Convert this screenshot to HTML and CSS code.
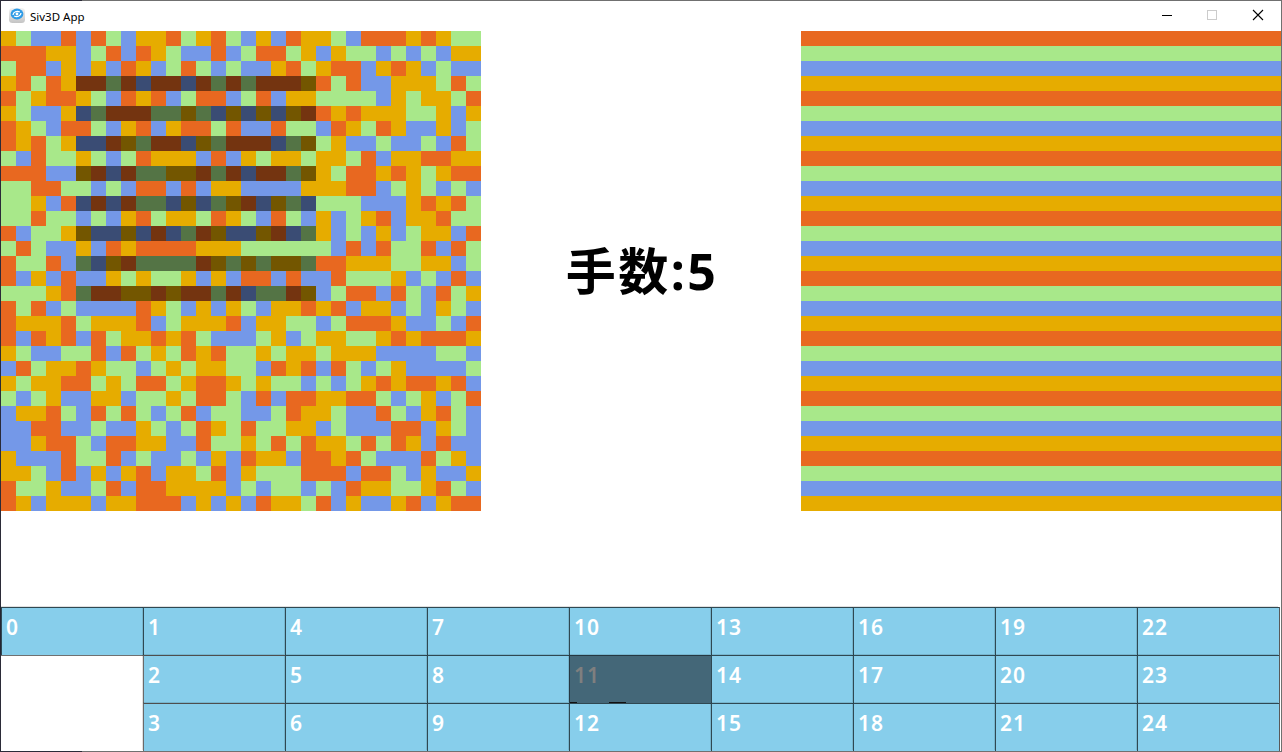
FILE: index.html
```html
<!DOCTYPE html>
<html lang="en">
<head>
    <meta charset="UTF-8">
    <meta name="viewport" content="width=device-width, initial-scale=1.0">
    <title>Siv3D App</title>
    <link rel="stylesheet" href="styles.css">
</head>
<body>
    <div class="window">
        <div class="titlebar">
            <svg class="app-icon" width="18" height="18" viewBox="0 0 18 18">
                <defs>
                    <linearGradient id="tile" x1="0" y1="0" x2="0" y2="1">
                        <stop offset="0" stop-color="#f4f4f4"/>
                        <stop offset="1" stop-color="#c4c4c4"/>
                    </linearGradient>
                </defs>
                <rect x="1" y="1" width="16" height="15" rx="3.5" fill="url(#tile)"/>
                <ellipse cx="9" cy="7" rx="6.4" ry="5.4" fill="#2f9be6"/>
                <path d="M5 8 C5.2 5 9 3.4 11.8 5 M13 6 C12.8 9 9 10.6 6.2 9" fill="none" stroke="#fff" stroke-width="1.3"/>
                <circle cx="9" cy="7" r="1.4" fill="#fff"/>
            </svg>
            <span class="app-name">Siv3D App</span>
            <div class="controls">
                <svg class="control" width="46" height="30" viewBox="0 0 46 30"><rect x="19" y="14" width="10" height="1" fill="#000"/></svg>
                <svg class="control" width="46" height="30" viewBox="0 0 46 30"><rect x="18.5" y="9.5" width="9" height="9" fill="none" stroke="#ccc"/></svg>
                <svg class="control" width="46" height="30" viewBox="0 0 46 30"><path d="M18 9 L28 19 M28 9 L18 19" stroke="#000" stroke-width="1.1"/></svg>
            </div>
        </div>

        <div class="boards">
            <div class="board" id="current"></div>
            <div class="moves">手数:5</div>
            <div class="board" id="goal"></div>
        </div>

        <div class="panel">
            <div class="btn">0</div>
            <div class="blank"></div>
            <div class="btn">1</div>
            <div class="btn edge">2</div>
            <div class="btn edge">3</div>
            <div class="btn">4</div>
            <div class="btn">5</div>
            <div class="btn">6</div>
            <div class="btn">7</div>
            <div class="btn">8</div>
            <div class="btn">9</div>
            <div class="btn">10</div>
            <div class="btn active">11</div>
            <div class="btn">12</div>
            <div class="btn">13</div>
            <div class="btn">14</div>
            <div class="btn">15</div>
            <div class="btn">16</div>
            <div class="btn">17</div>
            <div class="btn">18</div>
            <div class="btn">19</div>
            <div class="btn">20</div>
            <div class="btn">21</div>
            <div class="btn">22</div>
            <div class="btn">23</div>
            <div class="btn">24</div>
        </div>
    </div>

    <script src="script.js"></script>
</body>
</html>
```

FILE: styles.css
```css
body {
    margin: 0;
    background: white;
    font-family: "Noto Sans", "Noto Sans CJK JP", sans-serif;
}
.window {
    width: 1282px;
    height: 752px;
    box-sizing: border-box;
    padding: 1px;
    overflow: hidden;
    background:
        linear-gradient(#2b2b38, #2b2b38) left top / 82px 1px no-repeat,
        linear-gradient(#2b2b38, #2b2b38) left bottom / 82px 1px no-repeat,
        linear-gradient(#2b2b38, #2b2b38) left top / 1px 100% no-repeat,
        linear-gradient(#707070, #707070) left top / 100% 1px no-repeat,
        linear-gradient(#707070, #707070) left bottom / 100% 1px no-repeat,
        linear-gradient(#707070, #707070) right top / 1px 100% no-repeat,
        white;
}
.titlebar {
    display: flex;
    align-items: center;
    height: 30px;
    padding-left: 7px;
    background: white;
}
.app-icon {
    margin-right: 4px;
    margin-top: -1px;
}
.app-name {
    font-size: 11.5px;
    color: black;
}
.controls {
    display: flex;
    margin-left: auto;
}
.control {
    display: block;
}
.boards {
    display: flex;
    height: 480px;
}
.board {
    display: grid;
    grid-template-columns: repeat(32, 15px);
    grid-auto-rows: 15px;
    width: 480px;
    height: 480px;
}
.moves {
    flex: 1;
    display: flex;
    align-items: center;
    justify-content: center;
    padding-bottom: 6px;
    padding-left: 2px;
    font-size: 50px;
    font-weight: 700;
    letter-spacing: 2.5px;
    color: black;
}
.c-o { background: #e86820; }
.c-g { background: #a8e88a; }
.c-b { background: #7498e8; }
.c-y { background: #e6ac00; }
.c-od { background: #743410; }
.c-gd { background: #547445; }
.c-bd { background: #3a4c74; }
.c-yd { background: #735600; }
.panel {
    display: grid;
    grid-template-rows: repeat(3, 48px);
    grid-template-columns: repeat(9, 142px);
    grid-auto-flow: column;
    width: 1279px;
    box-sizing: border-box;
    margin-top: 96px;
    border-right: 1px solid rgba(0, 0, 0, 0.65);
}
.btn {
    box-sizing: border-box;
    padding: 4px 0 0 4px;
    border-left: 1px solid rgba(0, 0, 0, 0.65);
    border-top: 1px solid rgba(0, 0, 0, 0.65);
    box-shadow: -1px -1px 0 rgba(0, 0, 0, 0.12);
    background: #87ceeb;
    color: white;
    font-size: 21px;
    font-weight: 600;
    letter-spacing: 1px;
    line-height: 30px;
}
.edge {
    border-left-color: #6a6a6a;
    background-clip: padding-box;
}
.blank {
    grid-row: span 2;
    border-top: 1px solid #707070;
}
.active {
    position: relative;
    background: #446778;
    color: #7f7f7f;
    border-color: rgba(0, 0, 0, 0.45);
}
.active::after {
    content: "";
    position: absolute;
    left: 0;
    bottom: 0;
    width: 56px;
    height: 1px;
    background: linear-gradient(to right, #111 7px, transparent 7px, transparent 39px, #111 39px);
}
```

FILE: script.js
```js
// Y/G/B/O are the plain tile colours, lower case is the darkened version
const currentRows = [
    "YGBBOBOGBYYOGYOGBYBOYYGBOOOYOYGG",
    "OOOYYBGOBOYGBBOBGOOGYBYGGBGBGBYY",
    "GOOBYBYBOYBGOGBGBBYOGYOOBYOYBGBB",
    "YOGOYoogoboobogogoooyOGOBBYYYGOG",
    "OGYOOYGBOYOBGOOBGOBYYGGGGBYGYYGO",
    "YGBBYbgoooggygbybybyoOYOYYYGGYBY",
    "OYGBOOGBYOBYOOGOBBOGGBOYGOYBBYBG",
    "OYOGYbboygoobygooobgyGYBBGBBGBOG",
    "GBOGGYGBGOYYYBOBYGYYGYYGOBYYOOYY",
    "OOOBByoboggyyogoboogyYGOOYOYGYOO",
    "GGOOGGBGBOOBOBYYBBBBYYYOOBGYGBGB",
    "GGYBOboboggbybgyobygbGGGBBBYOYOG",
    "GGOGGBGBYOGYYGOYGBOGBYBGYOBYYOGG",
    "OBGGYybbybobgoybbyobgYBGBYBGYYBO",
    "GOGBBYBOYOOOOYYYGGGGGGBOBOGGOBOG",
    "OGGOBgbyoggggoygygyygOOYYYGGYYBG",
    "OBYBOBBYGYGGYBYBOOBOBBOGGGYBGBOB",
    "GGGYOgooyyoyoogobggoyBGOOBOGBOGY",
    "OGOBGBBBBOYGBYBYGBYYOYOBYYBGBYGB",
    "OYYYOGYYYOBGYYYOBYYGGBGOOOYBBGBO",
    "OBOYOBOGYYOYOGBBBGYBGYYGGYOYOOOY",
    "YGBBGGOBOGYGOYOGGYGYYGYYYBBBBGGB",
    "BOGYYOYGGBGYGYYGGBOYOBOGBGYBBBBG",
    "YGYYOOGYGOOGYOOYGYGGBGBGYOYOOYOB",
    "GBGYBBYYBGGYGOOGBOBOOYYOOGBGYBGO",
    "BYYOGBOGOGBGOBGGBBGOYYGBBOGBYOGB",
    "BBOOBBGBBYGBGOYGOGGYYBGBBBOOBYGB",
    "BBYOOGBOOYYBBOGGYGOGOYYGOGOYBOBB",
    "YBBBOGGOBGBBGBYBOYYBOOYOGBBBOGYB",
    "YYGBOBYBYOBYYGOBYGGGOOOBOOGBYBBY",
    "OGGYBBGOBOOYYYYBGBGGBGBOYYGGYOGB",
    "OYBYYYBYYOOOBYBYBOYYGOBYBBYOBYOO"
];

const classes = {
    O: "c-o", G: "c-g", B: "c-b", Y: "c-y",
    o: "c-od", g: "c-gd", b: "c-bd", y: "c-yd"
};

function fillBoard(id, rows) {
    const board = document.getElementById(id);
    rows.forEach(row => {
        for (const letter of row) {
            const tile = document.createElement("div");
            tile.className = classes[letter];
            board.appendChild(tile);
        }
    });
}

// the goal is just the four colours in stripes
const goalRows = [];
for (let i = 0; i < 32; i++) {
    goalRows.push("OGBY"[i % 4].repeat(32));
}

fillBoard("current", currentRows);
fillBoard("goal", goalRows);
```
